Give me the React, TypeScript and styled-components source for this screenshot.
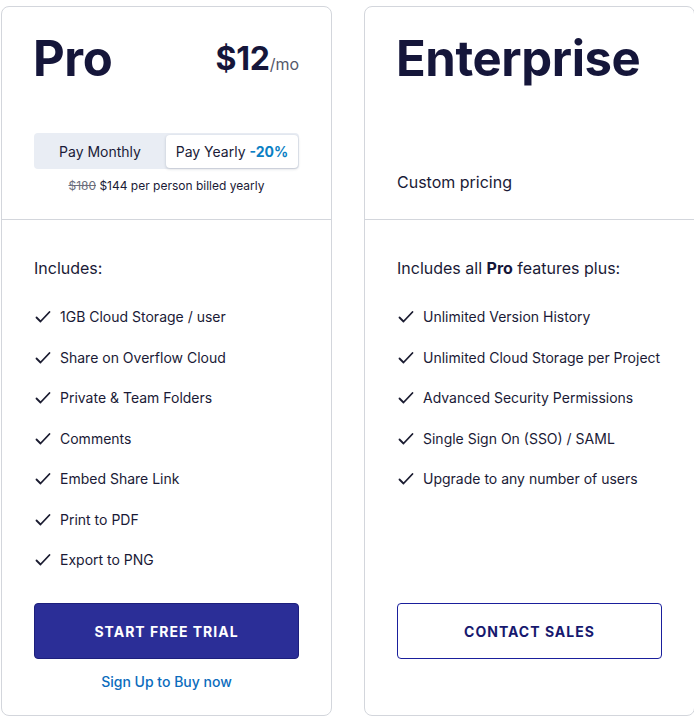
import React from "react";
import styled, { createGlobalStyle } from "styled-components";

const Global = createGlobalStyle`
  html, body { margin: 0; padding: 0; overflow: hidden; background: #fff; }
  body { font-family: Inter, "Noto Sans", Arial, sans-serif; color: #1a1a36; }
  * { box-sizing: border-box; }
`;

const Page = styled.div`
  display: flex;
  gap: 32px;
  padding: 6px 0 0 1px;
  width: 760px;
`;

const Card = styled.section`
  flex: 0 0 331px;
  height: 710px;
  border: 1px solid #d3d6dc;
  border-radius: 8px;
  display: flex;
  flex-direction: column;
  background: #fff;
`;

const Header = styled.div`
  height: 213px;
  padding: 22px 32px 25px;
  border-bottom: 1px solid #d3d6dc;
  display: flex;
  flex-direction: column;
  justify-content: space-between;
`;

const TitleRow = styled.div`
  display: flex;
  align-items: flex-start;
  justify-content: space-between;
`;

const Title = styled.h2`
  margin: 0 0 0 -1px;
  font-size: 49px;
  line-height: 60px;
  font-weight: 700;
  color: #15163a;
  letter-spacing: -0.4px;
`;

const Price = styled.div`
  display: flex;
  align-items: baseline;
  margin-top: 10px;
  line-height: 40px;
`;

const Amount = styled.span`
  font-size: 32px;
  font-weight: 700;
  color: #15163a;
  letter-spacing: -0.3px;
`;

const Per = styled.span`
  font-size: 16px;
  color: #55586a;
`;

const Billing = styled.div`
  display: flex;
  flex-direction: column;
  align-items: center;
  gap: 9px;
`;

const Toggle = styled.div`
  width: 100%;
  display: flex;
  padding: 2px 1px 1px 0;
  background: #e9edf4;
  border-radius: 4px;
  height: 36px;
`;

const Seg = styled.div<{ $active?: boolean }>`
  flex: 1;
  display: flex;
  align-items: center;
  justify-content: center;
  font-size: 14px;
  color: #1a1b38;
  border-radius: 4px;
  background: ${(p) => (p.$active ? "#fff" : "transparent")};
  box-shadow: ${(p) => (p.$active ? "0 1px 3px rgba(30,40,70,0.22)" : "none")};
`;

const Discount = styled.b`
  color: #0b80c4;
  font-weight: 700;
  margin-left: 4px;
`;

const Note = styled.div`
  font-size: 12px;
  line-height: 16px;
  color: #1a1a36;
`;

const Strike = styled.s`
  color: #6b6e7c;
`;

const Custom = styled.div`
  font-size: 16px;
  line-height: 24px;
  color: #1a1a36;
`;

const Body = styled.div`
  flex: 1;
  padding: 36px 32px 0;
  display: flex;
  flex-direction: column;
`;

const Lead = styled.p`
  margin: 0 0 25px;
  font-size: 16px;
  line-height: 24px;
  color: #1a1a36;
  b { font-weight: 700; color: #15163a; }
`;

const List = styled.ul`
  list-style: none;
  margin: 0;
  padding: 0;
  display: flex;
  flex-direction: column;
  gap: 16.5px;
`;

const Item = styled.li`
  display: flex;
  align-items: center;
  gap: 9px;
  font-size: 14px;
  line-height: 24px;
  color: #1a1a36;
  padding-left: 1px;
  white-space: nowrap;
`;

const Footer = styled.div`
  padding: 0 32px 23px;
  display: flex;
  flex-direction: column;
  align-items: stretch;
`;

const Button = styled.button<{ $outline?: boolean }>`
  height: 56px;
  border-radius: 4px;
  border: 1px solid ${(p) => (p.$outline ? "#1a1f9c" : "#1d1f7c")};
  background: ${(p) => (p.$outline ? "#fff" : "#2b2e97")};
  color: ${(p) => (p.$outline ? "#16186e" : "#fff")};
  font-family: Inter, Arial, sans-serif;
  font-size: 14px;
  font-weight: 700;
  letter-spacing: 1px;
  text-transform: uppercase;
  cursor: pointer;
`;

const LinkSlot = styled.div`
  margin-top: 13px;
  height: 20px;
  text-align: center;
  font-size: 14px;
  line-height: 20px;
  color: #0b6cbd;
  font-weight: 500;
`;

const Check = () => (
  <svg width="16" height="14" viewBox="0 0 16 14" fill="none">
    <path d="M1.5 7.5 L5.5 11.5 L14.5 2" stroke="#1a1b30" strokeWidth="1.8" strokeLinecap="round" strokeLinejoin="round" />
  </svg>
);

const proFeatures = [
  "1GB Cloud Storage / user",
  "Share on Overflow Cloud",
  "Private & Team Folders",
  "Comments",
  "Embed Share Link",
  "Print to PDF",
  "Export to PNG",
];

const entFeatures = [
  "Unlimited Version History",
  "Unlimited Cloud Storage per Project",
  "Advanced Security Permissions",
  "Single Sign On (SSO) / SAML",
  "Upgrade to any number of users",
];

const Features = ({ items }: { items: string[] }) => (
  <List>
    {items.map((f) => (
      <Item key={f}>
        <Check />
        {f}
      </Item>
    ))}
  </List>
);

export default function App() {
  return (
    <>
      <Global />
      <Page>
        <Card>
          <Header>
            <TitleRow>
              <Title>Pro</Title>
              <Price>
                <Amount>$12</Amount>
                <Per>/mo</Per>
              </Price>
            </TitleRow>
            <Billing>
              <Toggle>
                <Seg>Pay Monthly</Seg>
                <Seg $active>
                  Pay Yearly<Discount>-20%</Discount>
                </Seg>
              </Toggle>
              <Note>
                <Strike>$180</Strike> $144 per person billed yearly
              </Note>
            </Billing>
          </Header>
          <Body>
            <Lead>Includes:</Lead>
            <Features items={proFeatures} />
          </Body>
          <Footer>
            <Button>Start Free Trial</Button>
            <LinkSlot>Sign Up to Buy now</LinkSlot>
          </Footer>
        </Card>
        <Card>
          <Header>
            <TitleRow>
              <Title>Enterprise</Title>
            </TitleRow>
            <Custom>Custom pricing</Custom>
          </Header>
          <Body>
            <Lead>
              Includes all <b>Pro</b> features plus:
            </Lead>
            <Features items={entFeatures} />
          </Body>
          <Footer>
            <Button $outline>Contact Sales</Button>
            <LinkSlot />
          </Footer>
        </Card>
      </Page>
    </>
  );
}
